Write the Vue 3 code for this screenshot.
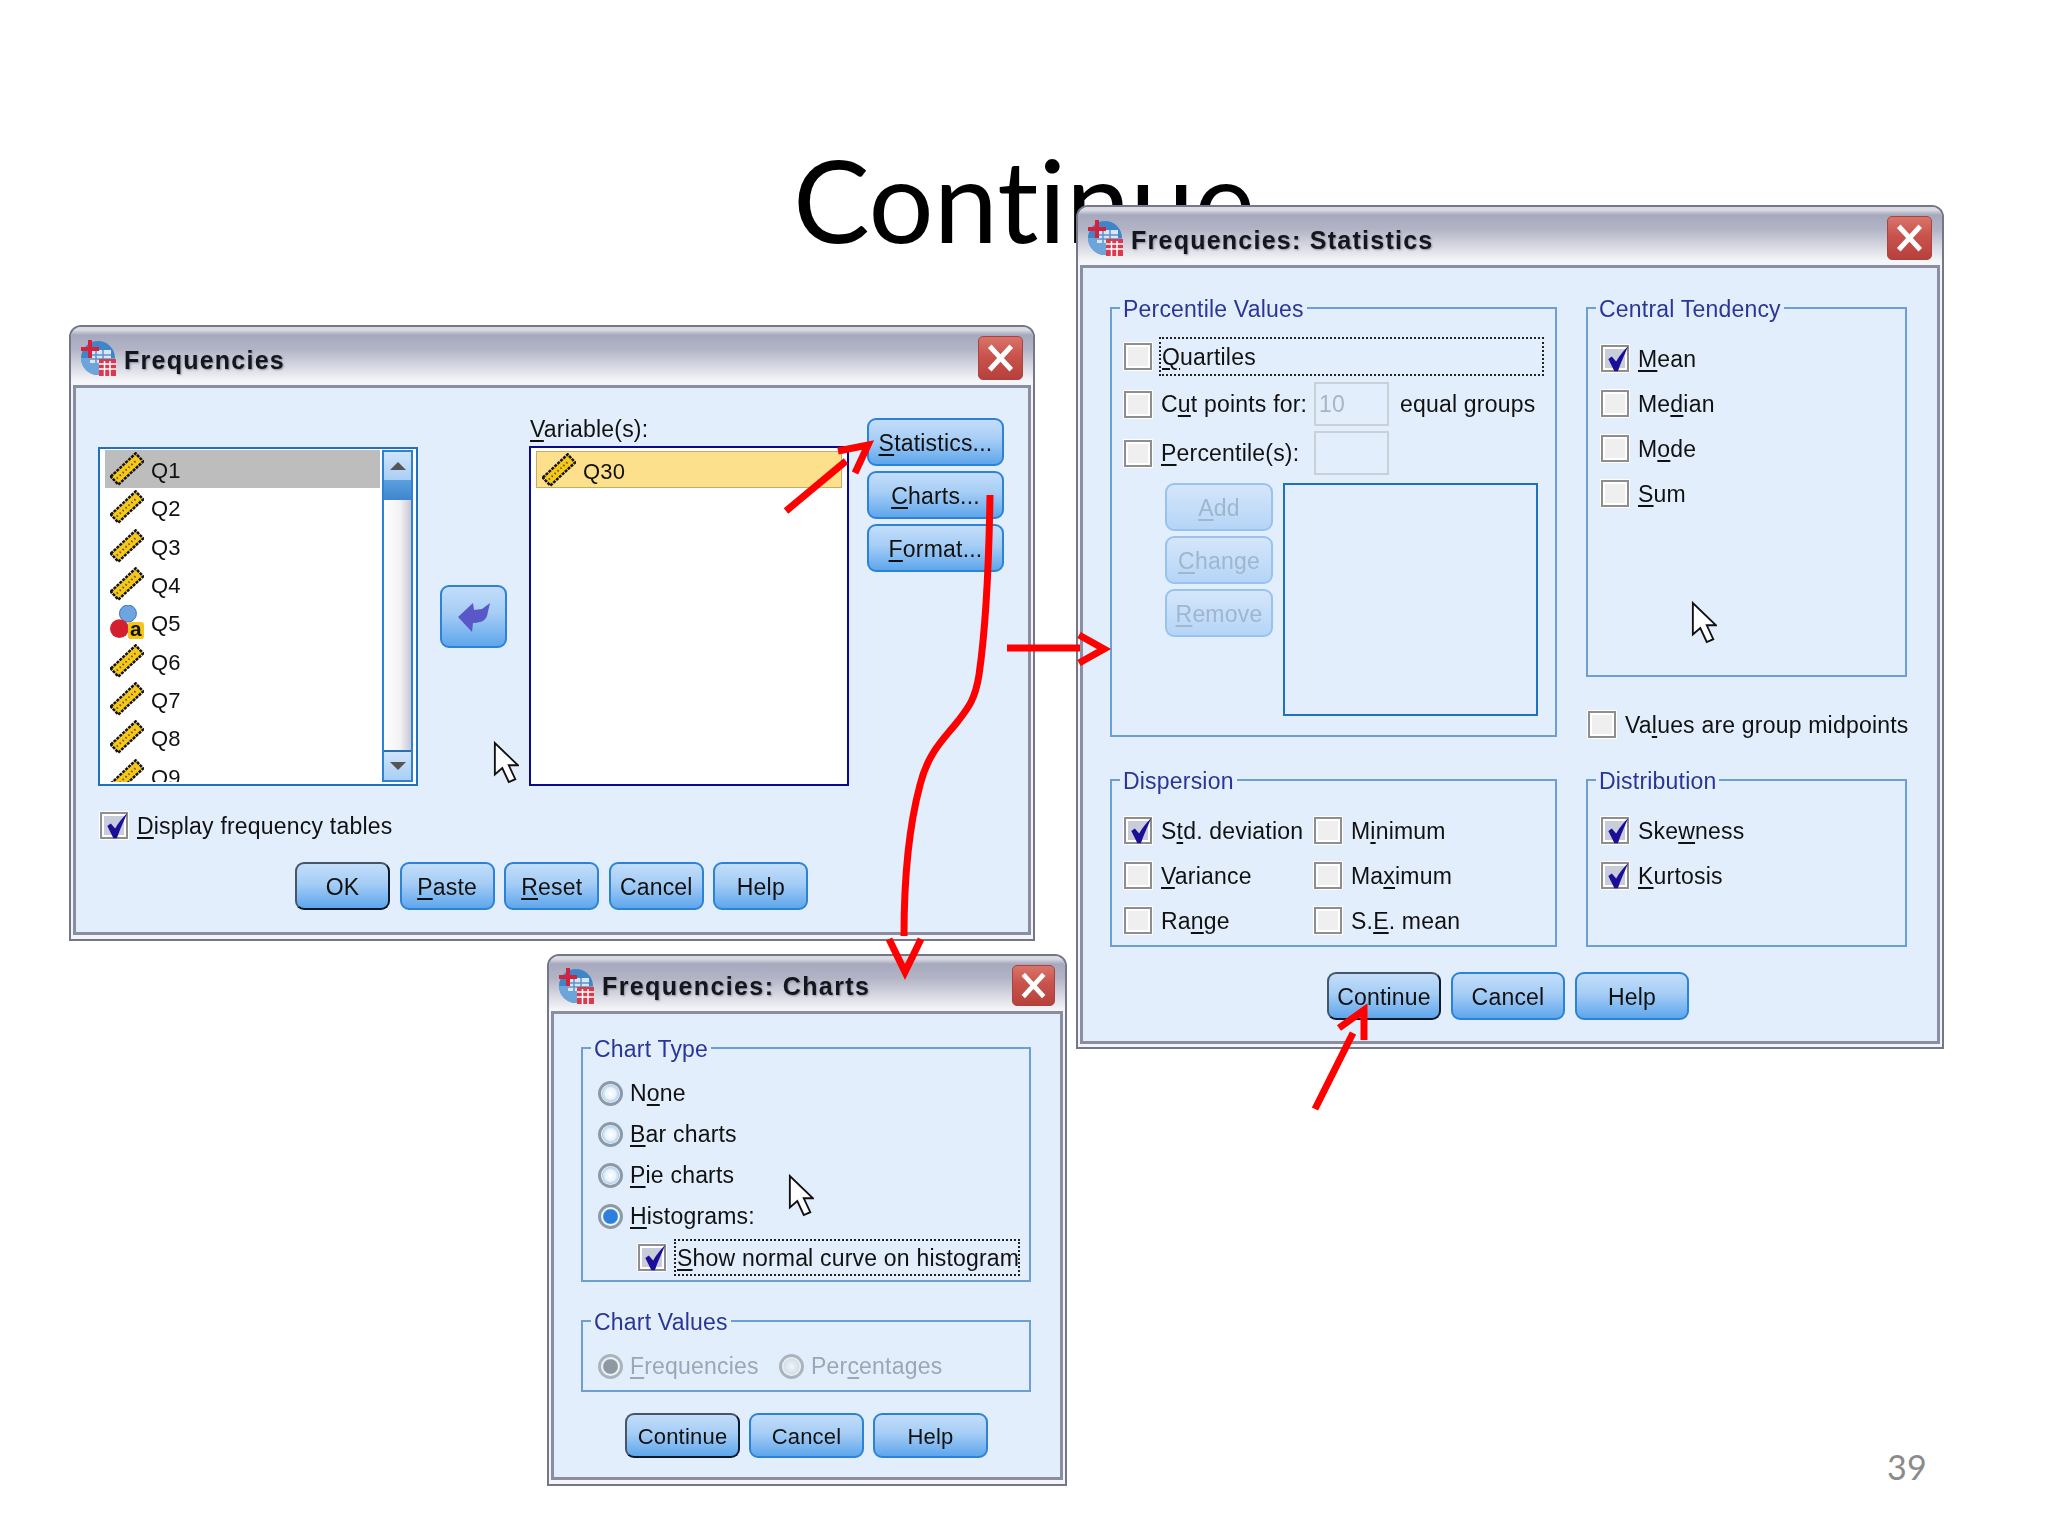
<script setup>
const label = (s) => {
  const [pre, rest = ''] = s.split('_')
  return { pre, key: rest.slice(0, 1), post: rest.slice(1) }
}

const leftVars = ['Q1', 'Q2', 'Q3', 'Q4', 'Q5', 'Q6', 'Q7', 'Q8', 'Q9']
const sideBtns = ['_Statistics...', '_Charts...', '_Format...'].map(label)
const mainBtns = [
  { ...label('OK'), def: true },
  label('_Paste'),
  label('_Reset'),
  label('Cancel'),
  label('Help')
]

const tendency = [
  { ...label('_Mean'), on: true },
  label('Me_dian'),
  label('M_ode'),
  label('_Sum')
]
const dispersion = [
  { ...label('S_td. deviation'), on: true },
  label('M_inimum'),
  label('_Variance'),
  label('Ma_ximum'),
  label('Ra_nge'),
  label('S._E. mean')
]
const distribution = [
  { ...label('Ske_wness'), on: true },
  { ...label('_Kurtosis'), on: true }
]
const listBtns = ['_Add', '_Change', '_Remove'].map(label)
const dlgBtns = [{ ...label('Continue'), def: true }, label('Cancel'), label('Help')]
const chartTypes = [
  label('N_one'),
  label('_Bar charts'),
  label('_Pie charts'),
  { ...label('_Histograms:'), on: true }
]
</script>

<template>
  <div class="slide">
    <svg class="defs" width="0" height="0">
      <symbol id="ruler" viewBox="0 0 34 34">
        <g transform="rotate(-43 17 17)">
          <rect x="0" y="11.5" width="34" height="11" fill="#f6c81c" stroke="#141414" stroke-width="2.5" stroke-dasharray="3 1" />
          <line x1="3" y1="17" x2="31" y2="17" stroke="#6b5a10" stroke-width="2" stroke-dasharray="1.5 2.5" />
        </g>
      </symbol>
      <symbol id="app-logo" viewBox="0 0 36 36">
        <circle cx="18" cy="18" r="17" fill="#3f86c8" />
        <path d="M1 18a17 17 0 0 0 34 0z" fill="#6ba5da" />
        <rect x="10" y="10" width="21" height="13" fill="#d8e6f4" />
        <path d="M10 15h21M10 19h21M16 10v13M23 10v13" stroke="#5b93cc" stroke-width="1.5" />
        <path d="M1 7h18v4H1zM8 0h4v18H8z" fill="#d6213c" />
        <rect x="19" y="19" width="17" height="17" fill="#d93a4d" />
        <path d="M19 24h17M19 29h17M24.5 21v15M30 21v15" stroke="#fff" stroke-width="1.5" />
      </symbol>
      <symbol id="tick" viewBox="0 0 30 30">
        <path d="M5 15l4-3 5 6C18 11 22 6 28 0c-4 9-8 18-12 29h-4z" fill="#1a0f96" />
      </symbol>
      <symbol id="cursor" viewBox="0 0 28 46">
        <path d="M2 2v34l8-7 7 15 7-3-7-15h10z" fill="#fff" stroke="#111" stroke-width="2" />
      </symbol>
      <symbol id="x" viewBox="0 0 44 42">
        <path d="M11 9l22 24M33 9L11 33" stroke="#fff" stroke-width="5" />
      </symbol>
    </svg>

    <h1 class="heading">Continue</h1>
    <span class="page-no">39</span>

    <!-- main dialog -->
    <section class="win win-main">
      <header class="title-bar">
        <svg class="app-icon"><use href="#app-logo" /></svg>
        <span class="title">Frequencies</span>
        <button class="close"><svg><use href="#x" /></svg></button>
      </header>
      <div class="client main-client">
        <div class="main-top">
          <div class="var-list">
            <ul class="rows">
              <li v-for="(v, i) in leftVars" :key="v" class="row" :class="{ picked: i === 0 }">
                <svg v-if="v === 'Q5'" class="var-icon" viewBox="0 0 36 36">
                  <circle cx="19" cy="9" r="9" fill="#6ea4e0" stroke="#3a6fb0" />
                  <circle cx="10" cy="25" r="10" fill="#d3202e" />
                  <rect x="19" y="18" width="17" height="18" rx="3" fill="#f5c518" />
                  <text x="27.500" y="33" text-anchor="middle" class="nominal-a">a</text>
                </svg>
                <svg v-else class="var-icon"><use href="#ruler" /></svg>
                <span class="var-name">{{ v }}</span>
              </li>
            </ul>
            <div class="scroll">
              <span class="sb-btn"><i class="tri"></i></span>
              <span class="sb-thumb"></span>
              <span class="sb-track"></span>
              <span class="sb-btn"><i class="tri down"></i></span>
            </div>
          </div>
          <button class="btn move-btn">
            <svg viewBox="0 0 32 30" width="32" height="30">
              <path d="M0 14L15 0l1 7 8-1 8-6-3 13c-2 5-7 7-14 7l-1 9z" fill="#5a58c8" />
            </svg>
          </button>
          <div class="target-col">
            <div class="var-label"><u>V</u>ariable(s):</div>
            <div class="target-list">
              <div class="row target-row">
                <svg class="var-icon"><use href="#ruler" /></svg>
                <span class="var-name">Q30</span>
              </div>
            </div>
          </div>
          <div class="side-btns">
            <button v-for="b in sideBtns" :key="b.post" class="btn">{{ b.pre }}<u>{{ b.key }}</u>{{ b.post }}</button>
          </div>
        </div>
        <label class="check display-check">
          <span class="cb on"><svg><use href="#tick" /></svg></span>
          <span class="cap"><u>D</u>isplay frequency tables</span>
        </label>
        <div class="main-btns">
          <button v-for="b in mainBtns" :key="b.pre + b.post" class="btn" :class="{ def: b.def }">{{ b.pre }}<u>{{ b.key }}</u>{{ b.post }}</button>
        </div>
      </div>
      <svg class="cursor cursor-main"><use href="#cursor" /></svg>
    </section>

    <!-- statistics dialog -->
    <section class="win win-stats">
      <header class="title-bar">
        <svg class="app-icon"><use href="#app-logo" /></svg>
        <span class="title">Frequencies: Statistics</span>
        <button class="close"><svg><use href="#x" /></svg></button>
      </header>
      <div class="client stats-client">
        <div class="stats-grid">
          <div class="group pv-group">
            <span class="legend">Percentile Values</span>
            <div class="pv-row first">
              <span class="cb"></span>
              <span class="focus quartiles"><u>Q</u>uartiles</span>
            </div>
            <div class="pv-row tall">
              <span class="cb"></span>
              <span class="pv-label">C<u>u</u>t points for:</span>
              <span class="field">10</span>
              <span class="equal">equal groups</span>
            </div>
            <div class="pv-row tall">
              <span class="cb"></span>
              <span class="pv-label"><u>P</u>ercentile(s):</span>
              <span class="field"></span>
            </div>
            <div class="pv-list-row">
              <div class="pv-btns">
                <button v-for="b in listBtns" :key="b.key" class="btn off"><u>{{ b.key }}</u>{{ b.post }}</button>
              </div>
              <div class="pv-list"></div>
            </div>
          </div>

          <div class="right-col">
            <div class="group ct-group">
              <span class="legend">Central Tendency</span>
              <div class="checks">
                <label v-for="o in tendency" :key="o.post" class="check">
                  <span class="cb" :class="{ on: o.on }"><svg v-if="o.on"><use href="#tick" /></svg></span>
                  <span class="cap">{{ o.pre }}<u>{{ o.key }}</u>{{ o.post }}</span>
                </label>
              </div>
              <svg class="cursor cursor-stats"><use href="#cursor" /></svg>
            </div>
            <label class="check midpoints">
              <span class="cb"></span>
              <span class="cap">Va<u>l</u>ues are group midpoints</span>
            </label>
          </div>

          <div class="group low-group">
            <span class="legend">Dispersion</span>
            <div class="disp-grid">
              <label v-for="o in dispersion" :key="o.post" class="check">
                <span class="cb" :class="{ on: o.on }"><svg v-if="o.on"><use href="#tick" /></svg></span>
                <span class="cap">{{ o.pre }}<u>{{ o.key }}</u>{{ o.post }}</span>
              </label>
            </div>
          </div>

          <div class="group low-group">
            <span class="legend">Distribution</span>
            <div class="checks dist">
              <label v-for="o in distribution" :key="o.post" class="check">
                <span class="cb on"><svg><use href="#tick" /></svg></span>
                <span class="cap">{{ o.pre }}<u>{{ o.key }}</u>{{ o.post }}</span>
              </label>
            </div>
          </div>
        </div>
        <div class="stats-btns">
          <button v-for="b in dlgBtns" :key="b.pre" class="btn" :class="{ def: b.def }">{{ b.pre }}</button>
        </div>
      </div>
    </section>

    <!-- charts dialog -->
    <section class="win win-charts">
      <header class="title-bar">
        <svg class="app-icon"><use href="#app-logo" /></svg>
        <span class="title">Frequencies: Charts</span>
        <button class="close"><svg><use href="#x" /></svg></button>
      </header>
      <div class="client charts-client">
        <div class="group type-group">
          <span class="legend">Chart Type</span>
          <div class="radios">
            <label v-for="o in chartTypes" :key="o.post" class="check">
              <span class="radio" :class="{ on: o.on }"></span>
              <span>{{ o.pre }}<u>{{ o.key }}</u>{{ o.post }}</span>
            </label>
          </div>
          <div class="curve-row">
            <span class="cb on"><svg><use href="#tick" /></svg></span>
            <span class="focus curve"><u>S</u>how normal curve on histogram</span>
          </div>
          <svg class="cursor cursor-charts"><use href="#cursor" /></svg>
        </div>
        <div class="group values-group">
          <span class="legend">Chart Values</span>
          <div class="values-row">
            <label class="check disabled">
              <span class="radio dim on"></span>
              <span><u>F</u>requencies</span>
            </label>
            <label class="check disabled">
              <span class="radio dim"></span>
              <span>Per<u>c</u>entages</span>
            </label>
          </div>
        </div>
        <div class="charts-btns">
          <button v-for="b in dlgBtns" :key="b.pre" class="btn" :class="{ def: b.def }">{{ b.pre }}</button>
        </div>
      </div>
    </section>

    <!-- annotations drawn over the slide -->
    <svg class="marks" viewBox="0 0 2048 1536" fill="none" stroke="#f00" stroke-width="7">
      <path d="M786 511L846 461M838 451L868 445L855 473" />
      <path d="M990 495C989 560 987 620 979 675C975 700 968 708 958 721C945 738 928 752 920 785C908 830 904 880 904 936" />
      <path d="M889 939L905 972L921 939" />
      <path d="M1007 648H1080M1079 635L1104 649L1079 663" />
      <path d="M1315 1109L1353 1033M1339 1028L1364 1010V1040" />
    </svg>
  </div>
</template>

<style scoped>
.slide {
  position: relative;
  width: 2048px;
  height: 1536px;
  overflow: hidden;
  background: #fff;
  font-family: "Liberation Sans", Arial, sans-serif;
  font-size: 23px;
  letter-spacing: 0.2px;
  color: #111;
}

.defs {
  position: absolute;
}

.nominal-a {
  font: bold 22px "Liberation Sans", sans-serif;
  fill: #111;
}

.heading {
  margin: 0;
  padding-top: 126px;
  text-align: center;
  font-family: Lato, "Open Sans", sans-serif;
  font-variant-ligatures: none;
  font-weight: 400;
  font-size: 115px;
  line-height: 144px;
  letter-spacing: 0;
  color: #000;
}

.page-no {
  position: absolute;
  left: 1887px;
  top: 1446px;
  font-family: Lato, sans-serif;
  font-size: 34px;
  color: #8b8b8b;
}

.win {
  position: absolute;
  box-sizing: border-box;
  display: flex;
  flex-direction: column;
  padding: 0 2px 4px;
  border: 2px solid #747689;
  border-radius: 12px 12px 0 0;
  background: #f4f5f8;
  filter: blur(0.4px);
}

.win-main {
  left: 69px;
  top: 325px;
  width: 966px;
  height: 616px;
}

.win-stats {
  left: 1076px;
  top: 205px;
  width: 868px;
  height: 844px;
  padding-bottom: 3px;
}

.win-charts {
  left: 547px;
  top: 954px;
  width: 520px;
  height: 532px;
}

.title-bar {
  display: flex;
  align-items: center;
  flex: none;
  box-sizing: border-box;
  height: 58px;
  padding: 4px 3px 0 9px;
  margin: 0 -2px;
  border-radius: 10px 10px 0 0;
  background: linear-gradient(#d9dae2 0, #d9dae2 3px, #a6a8bd 8px, #b2b4c6 22px, #f5f6f9 54px);
}

.win-charts .title-bar {
  height: 55px;
}

.app-icon {
  width: 36px;
  height: 36px;
  flex: none;
}

.title {
  margin-left: 8px;
  padding-top: 5px;
  font-weight: 700;
  font-size: 25px;
  letter-spacing: 1.25px;
  color: #15151c;
  text-shadow: 1px 1px 2px #8d90a2;
}

.win-charts .title {
  padding-top: 2px;
  letter-spacing: 1.4px;
}

.close {
  display: flex;
  box-sizing: border-box;
  width: 45px;
  height: 44px;
  margin-left: auto;
  margin-right: 7px;
  padding: 0;
  border: 1px solid #a8443e;
  border-radius: 5px;
  background: linear-gradient(#d9746a, #c8534c 45%, #b8403c);
}

.win-charts .close {
  width: 43px;
  height: 41px;
}

.close svg {
  width: 100%;
  height: 100%;
}

.client {
  flex: 1;
  border: 3px solid #8b8da1;
  background: #e3eefc;
  position: relative;
}

.btn {
  box-sizing: border-box;
  padding: 2px 0 0;
  font: inherit;
  letter-spacing: inherit;
  color: #111;
  border: 2px solid #2c83d6;
  border-radius: 9px;
  background: linear-gradient(#c3ddfa, #a5cdf5 45%, #5ea6ec);
}

.btn.def {
  border-color: #46566a #0d1a2b #0d1a2b #46566a;
}

.btn.off {
  color: #9fb6cd;
  border-color: #97c3ee;
  background: linear-gradient(#d5e6fb, #b5d5f7);
}

u {
  text-underline-offset: 3px;
  text-decoration-thickness: 2px;
}

/* main dialog */
.main-client {
  padding: 30px 0 0 22px;
}

.main-top {
  display: flex;
  align-items: flex-start;
}

.var-list {
  display: flex;
  box-sizing: border-box;
  width: 320px;
  height: 339px;
  margin-top: 29px;
  padding: 1px 3px 2px 5px;
  border: 2px solid #1f71bd;
  background: #fff;
}

.rows {
  flex: 1;
  margin: 0;
  padding: 0;
  list-style: none;
  overflow: hidden;
}

.row {
  display: flex;
  align-items: center;
  height: 38.3px;
}

.row.picked {
  background: #bdbdbd;
  margin-right: 2px;
}

.var-icon {
  width: 34px;
  height: 34px;
  flex: none;
  margin: 0 7px 0 5px;
}

.var-name {
  padding-top: 4px;
  font-size: 22px;
}

.scroll {
  display: flex;
  flex-direction: column;
  width: 31px;
  border: 2px solid #2c83d6;
  box-sizing: border-box;
}

.sb-btn {
  display: flex;
  align-items: center;
  justify-content: center;
  flex: none;
  height: 28px;
  background: linear-gradient(#cfe3fb, #a9cff6);
}

.tri {
  width: 0;
  height: 0;
  border: 8px solid transparent;
  border-top: 0;
  border-bottom: 8px solid #555;
}

.tri.down {
  border-bottom: 0;
  border-top: 8px solid #555;
}

.sb-thumb {
  flex: none;
  height: 20px;
  background: linear-gradient(#5b9fdf, #3f86cc);
}

.sb-track {
  flex: 1;
  background: linear-gradient(90deg, #fff, #f2f1f4 60%, #c9c8d2);
  border-bottom: 2px solid #2c6fb0;
}

.move-btn {
  display: flex;
  align-items: center;
  justify-content: center;
  width: 67px;
  height: 63px;
  margin: 167px 0 0 22px;
}

.target-col {
  margin-left: 22px;
}

.var-label {
  height: 28px;
  line-height: 22px;
  padding-left: 1px;
}

.target-list {
  box-sizing: border-box;
  width: 320px;
  height: 340px;
  padding: 3px 5px;
  border: 2px solid #0a0a8e;
  background: #fff;
}

.target-row {
  box-sizing: border-box;
  height: 37px;
  border: 1px solid #c4ad6a;
  background: #fde08b;
}

.side-btns {
  display: flex;
  flex-direction: column;
  gap: 5px;
  margin-left: 18px;
}

.side-btns .btn {
  width: 137px;
  height: 48px;
}

.check {
  display: flex;
  align-items: center;
}

.cap {
  padding-top: 2px;
}

.cb {
  position: relative;
  flex: none;
  box-sizing: border-box;
  width: 28px;
  height: 27px;
  margin-right: 9px;
  border: 2px solid #8e8e8e;
  outline: 1px solid #fff;
  background: #efefef;
  box-shadow: inset 0 0 0 2px #fff;
}

.cb.on {
  background: #c9ccdb;
}

.cb svg {
  position: absolute;
  left: 1px;
  top: -1px;
  width: 26px;
  height: 26px;
}

.display-check {
  margin: 25px 0 0 2px;
}

.main-btns {
  display: flex;
  gap: 9.6px;
  margin: 22px 0 0 197px;
}

.main-btns .btn {
  width: 95px;
  height: 48px;
}

/* statistics dialog */
.stats-client {
  padding: 39px 0 0 27px;
}

.stats-grid {
  display: grid;
  grid-template-columns: 447px 321px;
  column-gap: 29px;
}

.group {
  position: relative;
  box-sizing: border-box;
  border: 2px solid #6d9fd2;
}

.legend {
  position: absolute;
  left: 8px;
  top: -13px;
  padding: 0 3px;
  background: #e3eefc;
  color: #2a3696;
  line-height: 26px;
}

.pv-group {
  height: 430px;
  padding: 28px 0 0 12px;
}

.pv-row {
  display: flex;
  align-items: center;
}

.pv-row .cb {
  margin-right: 7px;
}

.pv-row.first {
  height: 39px;
}

.pv-row.tall {
  height: 44px;
  margin-top: 6px;
}

.pv-row.tall + .pv-row.tall {
  margin-top: 5px;
}

.focus {
  display: flex;
  align-items: center;
  box-sizing: border-box;
  padding-top: 2px;
  border: 2px dotted #222;
  white-space: pre;
  overflow: hidden;
}

.quartiles {
  width: 385px;
  height: 39px;
  padding-left: 1px;
}

.pv-label {
  width: 153px;
  padding-left: 2px;
}

.field {
  box-sizing: border-box;
  width: 75px;
  height: 44px;
  padding: 7px 0 0 3px;
  border: 2px solid #c9d0d8;
  color: #a9b5c2;
}

.equal {
  margin-left: 11px;
}

.pv-list-row {
  display: flex;
  margin: 8px 0 0 41px;
}

.pv-btns {
  display: flex;
  flex-direction: column;
  gap: 5px;
}

.pv-btns .btn {
  width: 108px;
  height: 48px;
}

.pv-list {
  box-sizing: border-box;
  width: 255px;
  height: 233px;
  margin-left: 10px;
  border: 2px solid #1f71bd;
}

.ct-group {
  height: 370px;
  padding: 35px 0 0 13px;
}

.checks {
  display: flex;
  flex-direction: column;
  gap: 16px;
}

.midpoints {
  height: 26px;
  margin: 34px 0 0 2px;
  white-space: nowrap;
}

.midpoints .cb {
  margin-right: 9px;
}

.low-group {
  height: 168px;
  margin-top: 42px;
}

.disp-grid {
  display: grid;
  grid-template-columns: 190px auto;
  row-gap: 16px;
  padding: 35px 0 0 12px;
}

.dist {
  padding: 35px 0 0 13px;
}

.right-col {
  grid-column: 2;
  grid-row: 1;
}

.stats-btns {
  display: flex;
  gap: 10px;
  margin: 25px 0 0 217px;
}

.stats-btns .btn {
  width: 114px;
  height: 48px;
}

/* charts dialog */
.charts-client {
  padding: 33px 0 0 27px;
}

.radio {
  position: relative;
  flex: none;
  box-sizing: border-box;
  width: 25px;
  height: 25px;
  margin-right: 7px;
  border-radius: 50%;
  border: 3px solid #8b9aa8;
  background: radial-gradient(circle, #fff 0, #eaf3fc 40%, #b6d3ee 60%, #f1f6fb 68%);
}

.radio.on {
  background: radial-gradient(circle, #2c7fda 0, #2c7fda 50%, #f1f6fb 60%);
}

.radio.dim {
  border-color: #a9b4bd;
  background: radial-gradient(circle, #f2f6fa 0, #d5dfe8 55%, #f1f6fb 68%);
}

.radio.dim.on {
  background: radial-gradient(circle, #8d98a2 0, #8d98a2 50%, #eef3f8 60%);
}

.type-group {
  width: 450px;
  height: 235px;
  padding: 31px 0 0 15px;
}

.radios {
  display: flex;
  flex-direction: column;
  gap: 14px;
}

.curve-row {
  display: flex;
  align-items: center;
  margin: 9px 0 0 40px;
}

.curve-row .cb {
  margin-right: 8px;
}

.curve {
  width: 346px;
  height: 37px;
  padding-left: 1px;
}

.values-group {
  width: 450px;
  height: 72px;
  margin-top: 38px;
}

.values-row {
  display: grid;
  grid-template-columns: 181px auto;
  padding: 31px 0 0 15px;
}

.disabled {
  color: #9aa7b6;
}

.charts-btns {
  display: flex;
  gap: 9px;
  margin: 21px 0 0 44px;
}

.charts-btns .btn {
  width: 115px;
  height: 45px;
  font-size: 22px;
}

/* overlays */
.cursor {
  position: absolute;
  width: 26px;
  height: 43px;
}

.cursor-main {
  left: 422px;
  top: 414px;
}

.cursor-stats {
  left: 103px;
  top: 292px;
}

.cursor-charts {
  left: 205px;
  top: 125px;
}

.marks {
  position: absolute;
  inset: 0;
  width: 2048px;
  height: 1536px;
  pointer-events: none;
}
</style>
